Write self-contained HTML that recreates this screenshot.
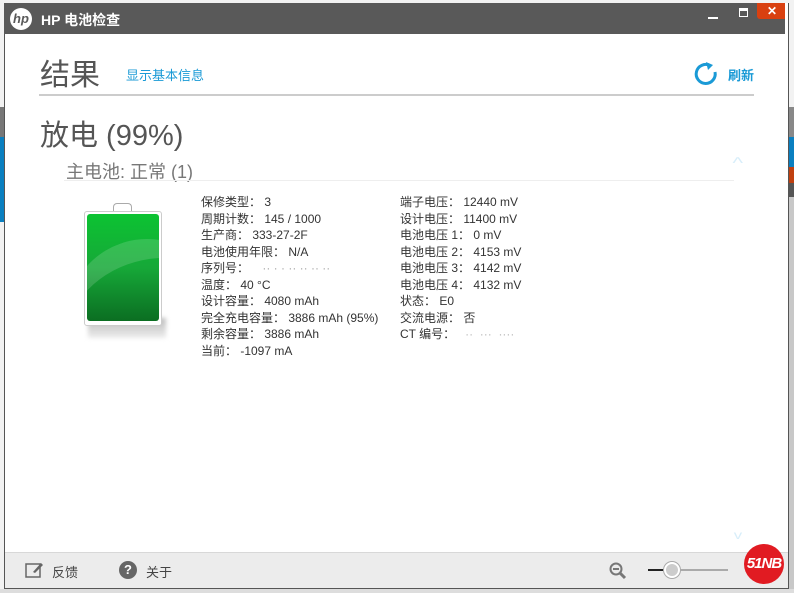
<!DOCTYPE html>
<html><head><meta charset="utf-8">
<style>
*{margin:0;padding:0;box-sizing:border-box}
body{width:794px;height:593px;overflow:hidden;background:#f2f2f2;font-family:"Liberation Sans","Noto Sans CJK SC",sans-serif;position:relative}
.abs{position:absolute}
.win{left:4px;top:3px;width:785px;height:586px;background:#fff;border:1px solid #555;border-top:none}
.title{left:4px;top:3px;width:781px;height:31px;background:#595959;color:#fff;overflow:hidden}
.info{font-size:12px;color:#333;line-height:16.5px;white-space:nowrap}
</style></head><body>
<div class="abs" style="left:0;top:107px;width:4px;height:30px;background:#777"></div>
<div class="abs" style="left:0;top:137px;width:4px;height:85px;background:#0a7fc0"></div>
<div class="abs" style="left:788px;top:107px;width:6px;height:30px;background:#888"></div>
<div class="abs" style="left:788px;top:137px;width:6px;height:30px;background:#0a7fc0"></div>
<div class="abs" style="left:788px;top:167px;width:6px;height:16px;background:#c04010"></div>
<div class="abs" style="left:788px;top:183px;width:6px;height:14px;background:#555"></div>
<div class="abs" style="left:788px;top:197px;width:6px;height:396px;background:#c8c8c8"></div>
<div class="abs" style="left:0;top:589px;width:794px;height:4px;background:#ddd"></div>

<div class="abs win"></div>
<div class="abs title">
  <div class="abs" style="left:6px;top:5px;width:22px;height:22px;border-radius:50%;background:#fff;color:#595959;font-size:13px;font-style:italic;font-weight:bold;text-align:center;line-height:22px">hp</div>
  <div class="abs" style="left:37px;top:7px;font-size:14px;font-weight:600">HP 电池检查</div>
  <div class="abs" style="left:704px;top:14px;width:10px;height:2px;background:#fff"></div>
  <div class="abs" style="left:735px;top:5px;width:9px;height:9px;border:1px solid #fff;border-top:3px solid #fff"></div>
  <div class="abs" style="left:753px;top:0;width:30px;height:16px;background:#d94010;border-radius:0 0 3px 3px;overflow:hidden;color:#fff;font-size:12px;font-weight:bold;text-align:center;line-height:16px">✕</div>
</div>

<div class="abs" style="left:40px;top:50px;font-size:30px;color:#555">结果</div>
<div class="abs" style="left:126px;top:65px;font-size:13px;color:#1a9ad6">显示基本信息</div>
<svg class="abs" style="left:692px;top:60px" width="28" height="28" viewBox="0 0 28 28"><path d="M18 5.5 A9.5 9.5 0 1 0 23 12" fill="none" stroke="#1a9ad6" stroke-width="3"/><path d="M14 2 L21 5 L16 10 Z" fill="#1a9ad6"/></svg>
<div class="abs" style="left:728px;top:65px;font-size:13px;font-weight:bold;color:#1a9ad6">刷新</div>
<div class="abs" style="left:39px;top:94px;width:715px;height:2px;background:#ccc"></div>

<div class="abs" style="left:40px;top:112px;font-size:29px;color:#555">放电 (99%)</div>
<div class="abs" style="left:66px;top:158px;font-size:18px;color:#777">主电池: 正常 (1)</div>
<div class="abs" style="left:64px;top:180px;width:670px;height:1px;background:#eee"></div>
<div class="abs" style="left:734px;top:155px;color:#d8eefa;font-size:16px;transform:scaleX(1.4)">^</div>
<div class="abs" style="left:735px;top:528px;color:#d8eefa;font-size:12px;transform:scaleX(1.4)">v</div>

<div class="abs" style="left:113px;top:203px;width:19px;height:10px;border:1px solid #aaa;border-bottom:none;border-radius:4px 4px 0 0;background:#fff"></div>
<div class="abs" style="left:88px;top:318px;width:78px;height:20px;background:linear-gradient(#bbb,#eee);filter:blur(2px)"></div>
<div class="abs" style="left:84px;top:211px;width:78px;height:115px;background:#fff;border:1px solid #ccc;border-radius:3px"></div>
<div class="abs" style="left:87px;top:214px;width:72px;height:107px;border-radius:3px;background:linear-gradient(#0cc332,#16a838 50%,#0b6e22);overflow:hidden">
  <div class="abs" style="left:-20px;top:25px;width:160px;height:160px;border-radius:50%;border-top:22px solid rgba(255,255,255,0.15);transform:rotate(-20deg)"></div>
</div>

<div class="abs info" style="left:201px;top:194px">保修类型： 3<br>周期计数： 145 / 1000<br>生产商： 333-27-2F<br>电池使用年限： N/A<br>序列号： <span style="color:#aaa">&nbsp;&nbsp;&nbsp;·· · · ·· ·· ·· ··</span><br>温度： 40 °C<br>设计容量： 4080 mAh<br>完全充电容量： 3886 mAh (95%)<br>剩余容量： 3886 mAh<br>当前： -1097 mA</div>
<div class="abs info" style="left:400px;top:194px">端子电压： 12440 mV<br>设计电压： 11400 mV<br>电池电压 1： 0 mV<br>电池电压 2： 4153 mV<br>电池电压 3： 4142 mV<br>电池电压 4： 4132 mV<br>状态： E0<br>交流电源： 否<br>CT 编号： <span style="color:#bbb">&nbsp;&nbsp;·· &nbsp;··· &nbsp;····</span></div>

<div class="abs" style="left:5px;top:552px;width:783px;height:36px;background:#ececec;border-top:1px solid #d8d8d8"></div>
<svg class="abs" style="left:25px;top:561px" width="20" height="18" viewBox="0 0 20 18"><rect x="1" y="3" width="14" height="13" fill="none" stroke="#666" stroke-width="1.5"/><path d="M8 11 L16 2 L18 4 L10 12 Z" fill="#666"/></svg>
<div class="abs" style="left:52px;top:562px;font-size:13px;color:#444">反馈</div>
<div class="abs" style="left:119px;top:561px;width:18px;height:18px;border-radius:50%;background:#666;color:#fff;font-size:13px;font-weight:bold;text-align:center;line-height:18px">?</div>
<div class="abs" style="left:146px;top:562px;font-size:13px;color:#444">关于</div>
<svg class="abs" style="left:608px;top:561px" width="20" height="20" viewBox="0 0 20 20"><circle cx="8" cy="8" r="5.5" fill="none" stroke="#777" stroke-width="2"/><path d="M5 8 H11" stroke="#777" stroke-width="2"/><path d="M12 12 L17 17" stroke="#777" stroke-width="3"/></svg>
<div class="abs" style="left:648px;top:569px;width:80px;height:2px;background:#aaa"></div>
<div class="abs" style="left:648px;top:569px;width:20px;height:2px;background:#222"></div>
<div class="abs" style="left:664px;top:562px;width:16px;height:16px;border-radius:50%;background:#ccc;border:2px solid #fff;box-shadow:0 0 0 1px #aaa"></div>
<div class="abs" style="left:744px;top:544px;width:40px;height:40px;border-radius:50%;background:#e11b22;color:#fff;font-size:15px;font-weight:bold;font-style:italic;text-align:center;line-height:40px;letter-spacing:-1px">51NB</div>
</body></html>
